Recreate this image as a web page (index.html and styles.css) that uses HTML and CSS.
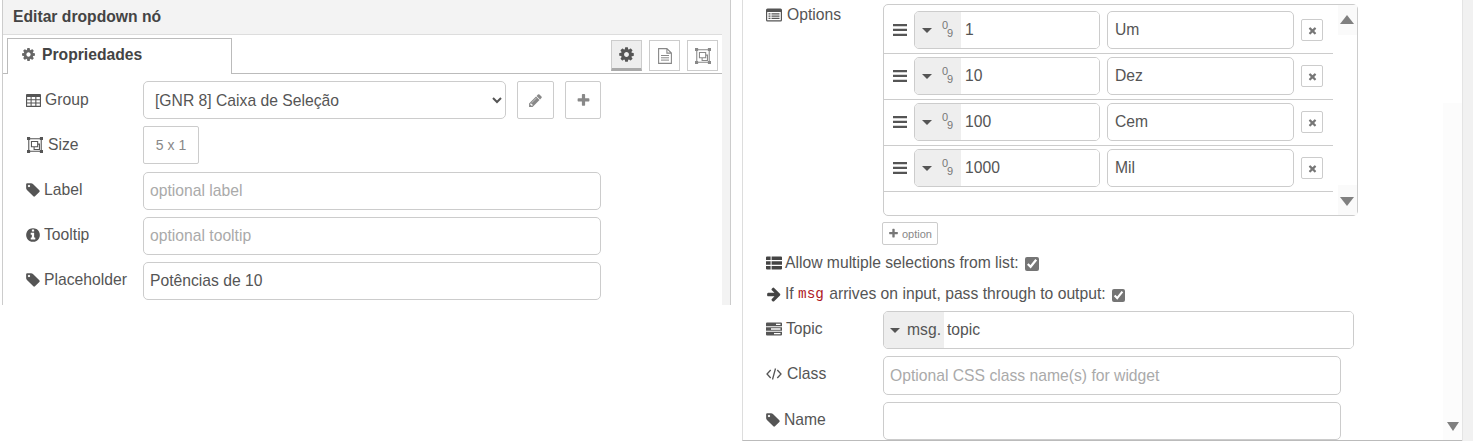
FILE: index.html

```html
<!DOCTYPE html>
<html lang="pt">
<head>
  <meta charset="UTF-8" />
  <title>Editar dropdown nó</title>
  <link rel="stylesheet" href="styles.css">
</head>
<body>
  <svg class="defs" xmlns="http://www.w3.org/2000/svg">
    <symbol id="i-cog" viewBox="0 0 1792 1792"><path d="M1152 896q0-106-75-181t-181-75-181 75-75 181 75 181 181 75 181-75 75-181zm512-109v222q0 12-8 23t-20 13l-185 28q-19 54-39 91 35 50 107 138 10 12 10 25t-9 23q-27 37-99 108t-94 71q-12 0-26-9l-138-108q-44 23-91 38-16 136-29 186-7 27-36 27h-222q-14 0-24.500-8.500t-11.500-21.500l-28-184q-49-16-90-37l-141 107q-10 9-25 9-14 0-25-11-126-114-165-168-7-10-7-23 0-12 8-23 15-21 51-66.500t54-70.500q-27-50-41-99l-183-27q-13-2-21-12.500t-8-23.500v-222q0-12 8-23t19-13l186-28q14-46 39-92-40-57-107-138-10-12-10-24 0-10 9-23 26-36 98.500-107.500t94.500-71.500q13 0 26 10l138 107q44-23 91-38 16-136 29-186 7-27 36-27h222q14 0 24.500 8.500t11.500 21.500l28 184q49 16 90 37l142-107q9-9 24-9 13 0 25 10 129 119 165 170 7 8 7 22 0 12-8 23-15 21-51 66.500t-54 70.500q26 50 41 98l183 28q13 2 21 12.500t8 23.500z"/></symbol>
    <symbol id="i-tag" viewBox="0 0 1792 1792"><path d="M576 448q0-53-37.500-90.500t-90.500-37.500-90.500 37.500-37.500 90.500 37.500 90.500 90.500 37.500 90.500-37.500 37.500-90.500zm1067 576q0 53-37 90l-491 492q-39 37-91 37-53 0-90-37l-715-716q-38-37-64.500-101t-26.500-117v-416q0-52 38-90t90-38h416q53 0 117 26.500t102 64.500l715 714q37 39 37 91z"/></symbol>
    <symbol id="i-info" viewBox="0 0 1792 1792"><path d="M1152 1376v-160q0-14-9-23t-23-9h-96v-512q0-14-9-23t-23-9h-320q-14 0-23 9t-9 23v160q0 14 9 23t23 9h96v320h-96q-14 0-23 9t-9 23v160q0 14 9 23t23 9h448q14 0 23-9t9-23zm-128-896v-160q0-14-9-23t-23-9h-192q-14 0-23 9t-9 23v160q0 14 9 23t23 9h192q14 0 23-9t9-23zm640 416q0 209-103 385.500t-279.500 279.500-385.500 103-385.500-103-279.500-279.500-103-385.500 103-385.500 279.500-279.500 385.500-103 385.500 103 279.500 279.500 103 385.500z"/></symbol>
    <symbol id="i-pencil" viewBox="0 0 1792 1792"><path d="M491 1536l91-91-235-235-91 91v107h128v128h107zm523-928q0-22-22-22-10 0-17 7l-542 542q-7 7-7 17 0 22 22 22 10 0 17-7l542-542q7-7 7-17zm-54-192l416 416-832 832h-416v-416zm683 96q0 53-37 90l-166 166-416-416 166-165q36-38 90-38 53 0 91 38l235 234q37 39 37 91z"/></symbol>
    <symbol id="i-plus" viewBox="0 0 1792 1792"><path d="M1600 736v192q0 40-28 68t-68 28h-416v416q0 40-28 68t-68 28h-192q-40 0-68-28t-28-68v-416h-416q-40 0-68-28t-28-68v-192q0-40 28-68t68-28h416v-416q0-40 28-68t68-28h192q40 0 68 28t28 68v416h416q40 0 68 28t28 68z"/></symbol>
    <symbol id="i-bars" viewBox="0 0 14 12"><path d="M0 0h14v2.300H0zM0 4.800h14v2.300H0zM0 9.700h14V12H0z"/></symbol>
    <symbol id="i-arrow" viewBox="0 0 1792 1792"><path d="M1600 960q0 54-37 91l-651 651q-39 37-91 37-51 0-90-37l-75-75q-38-38-38-91t38-91l293-293h-704q-52 0-84.500-37.500t-32.500-90.500v-128q0-53 32.500-90.500t84.500-37.500h704l-293-294q-38-36-38-90t38-90l75-75q38-38 90-38 53 0 91 38l651 651q37 35 37 90z"/></symbol>
    <symbol id="i-times" viewBox="0 0 1792 1792"><path d="M1490 1322q0 40-28 68l-136 136q-28 28-68 28t-68-28l-294-294-294 294q-28 28-68 28t-68-28l-136-136q-28-28-28-68t28-68l294-294-294-294q-28-28-28-68t28-68l136-136q28-28 68-28t68 28l294 294 294-294q28-28 68-28t68 28l136 136q28 28 28 68t-28 68l-294 294 294 294q28 28 28 68z"/></symbol>
    <symbol id="i-table" viewBox="0 0 16 14"><path fill-rule="evenodd" d="M1 0h14a1 1 0 0 1 1 1v12a1 1 0 0 1-1 1H1a1 1 0 0 1-1-1V1a1 1 0 0 1 1-1zm.2 3.300v2.400h3.700V3.300zm4.800 0v2.400h3.900V3.300zm5.100 0v2.400h3.700V3.300zM1.200 6.800v2.300h3.700V6.800zm4.800 0v2.300h3.900V6.800zm5.100 0v2.300h3.700V6.800zM1.200 10.200v2.500h3.700v-2.500zm4.800 0v2.500h3.900v-2.500zm5.100 0v2.500h3.700v-2.500z"/></symbol>
    <symbol id="i-select" viewBox="0 0 18 18"><path fill="none" stroke="currentColor" stroke-width="1.200" d="M2 2h14v14H2z"/><path fill="none" stroke="currentColor" stroke-width="1.200" d="M5 5h7v6H5zM8 11v3h6V8h-2"/><path d="M0 0h3.500v3.500H0zM14.500 0H18v3.500h-3.500zM0 14.500h3.500V18H0zM14.500 14.500H18V18h-3.500z"/></symbol>
    <symbol id="i-file" viewBox="0 0 14 16"><path fill="none" stroke="currentColor" stroke-width="1.100" d="M.6.600h8.300l4.500 4.500v10.300H.6zM8.900.600v4.500h4.500"/><path fill="none" stroke="currentColor" d="M3 7.500h8M3 9.800h8M3 12.100h8"/></symbol>
    <symbol id="i-listalt" viewBox="0 0 16 13"><path fill-rule="evenodd" d="M1.500 0h13A1.500 1.500 0 0 1 16 1.500v10a1.500 1.500 0 0 1-1.500 1.500h-13A1.500 1.500 0 0 1 0 11.500v-10A1.500 1.500 0 0 1 1.500 0zM1.200 3.400v8.100c0 .2.100.3.300.3h13c.2 0 .3-.1.300-.3V3.400z"/><path d="M2.500 4.800h2v1.300h-2zM2.500 7h2v1.300h-2zM2.500 9.200h2v1.300h-2zM5.500 4.800h8v1.300h-8zM5.500 7h8v1.300h-8zM5.500 9.200h8v1.300h-8z"/></symbol>
    <symbol id="i-thlist" viewBox="0 0 16 13"><path d="M1 0h3.600v3.600H0V1a1 1 0 0 1 1-1zM5.600 0H15a1 1 0 0 1 1 1v2.600H5.600zM0 4.700h4.600v3.600H0zM5.600 4.700H16v3.600H5.600zM0 9.400h4.600V13H1a1 1 0 0 1-1-1zM5.600 9.400H16V12a1 1 0 0 1-1 1H5.600z"/></symbol>
    <symbol id="i-tasks" viewBox="0 0 16 13"><path fill-rule="evenodd" d="M1 0h14a1 1 0 0 1 1 1v2.800H0V1a1 1 0 0 1 1-1zm9 1.200v1.400h4.500V1.200zM0 4.700h16v3.600H0zm5 1.100v1.400h9.500V5.800zM0 9.200h16V12a1 1 0 0 1-1 1H1a1 1 0 0 1-1-1zm8 1.200v1.400h6.500v-1.400z"/></symbol>
    <symbol id="i-code" viewBox="0 0 16 12"><path fill="none" stroke="currentColor" stroke-width="1.300" d="M4.700 2 1 6l3.700 4M11.300 2 15 6l-3.700 4M9.500 .5 6.500 11.500"/></symbol>
  </svg>

  <section class="left-pane">
    <div class="editor">
      <h1 class="editor-title">Editar dropdown nó</h1>
      <div class="tabs">
        <div class="tab"><svg class="icon tab-icon"><use href="#i-cog"/></svg>Propriedades</div>
        <div class="tab-tools">
          <a class="tool active"><svg class="icon tool-cog"><use href="#i-cog"/></svg></a>
          <a class="tool"><svg class="icon tool-file"><use href="#i-file"/></svg></a>
          <a class="tool"><svg class="icon tool-select"><use href="#i-select"/></svg></a>
        </div>
      </div>
      <div class="form">
        <div class="row">
          <label class="row-label lower"><svg class="icon"><use href="#i-table"/></svg>Group</label>
          <select class="field group-select"><option>[GNR 8] Caixa de Seleção</option></select>
          <a class="square-btn"><svg class="icon btn-icon"><use href="#i-pencil"/></svg></a>
          <a class="square-btn"><svg class="icon btn-icon"><use href="#i-plus"/></svg></a>
        </div>
        <div class="row">
          <label class="row-label lower"><svg class="icon size-icon"><use href="#i-select"/></svg>Size</label>
          <a class="size-btn">5 x 1</a>
        </div>
        <div class="row">
          <label class="row-label"><svg class="icon tag-icon"><use href="#i-tag"/></svg>Label</label>
          <input class="field wide" type="text" placeholder="optional label">
        </div>
        <div class="row">
          <label class="row-label"><svg class="icon tag-icon"><use href="#i-info"/></svg>Tooltip</label>
          <input class="field wide" type="text" placeholder="optional tooltip">
        </div>
        <div class="row">
          <label class="row-label"><svg class="icon tag-icon"><use href="#i-tag"/></svg>Placeholder</label>
          <input class="field wide" type="text" value="Potências de 10">
        </div>
      </div>
    </div>
    <div class="gutter"></div>
  </section>

  <section class="right-pane">
    <div class="right-body">
      <div class="options-block">
        <label class="side-label"><svg class="icon"><use href="#i-listalt"/></svg>Options</label>
        <div class="option-list">
          <div class="option-rows">
            <div class="option-row">
              <svg class="icon handle"><use href="#i-bars"/></svg>
              <div class="typed num"><span class="typed-sel"><i class="caret"></i><span class="num-glyph"><sup>0</sup><sub>9</sub></span></span><input type="text" value="1"></div>
              <input class="field opt-label" type="text" value="Um">
              <a class="del-btn"><svg class="icon"><use href="#i-times"/></svg></a>
            </div>
            <div class="option-row">
              <svg class="icon handle"><use href="#i-bars"/></svg>
              <div class="typed num"><span class="typed-sel"><i class="caret"></i><span class="num-glyph"><sup>0</sup><sub>9</sub></span></span><input type="text" value="10"></div>
              <input class="field opt-label" type="text" value="Dez">
              <a class="del-btn"><svg class="icon"><use href="#i-times"/></svg></a>
            </div>
            <div class="option-row">
              <svg class="icon handle"><use href="#i-bars"/></svg>
              <div class="typed num"><span class="typed-sel"><i class="caret"></i><span class="num-glyph"><sup>0</sup><sub>9</sub></span></span><input type="text" value="100"></div>
              <input class="field opt-label" type="text" value="Cem">
              <a class="del-btn"><svg class="icon"><use href="#i-times"/></svg></a>
            </div>
            <div class="option-row">
              <svg class="icon handle"><use href="#i-bars"/></svg>
              <div class="typed num"><span class="typed-sel"><i class="caret"></i><span class="num-glyph"><sup>0</sup><sub>9</sub></span></span><input type="text" value="1000"></div>
              <input class="field opt-label" type="text" value="Mil">
              <a class="del-btn"><svg class="icon"><use href="#i-times"/></svg></a>
            </div>
          </div>
          <div class="list-scroll"><i class="arrow-up"></i><i class="arrow-down"></i></div>
        </div>
      </div>
      <a class="add-btn"><svg class="icon"><use href="#i-plus"/></svg>option</a>
      <div class="check-row first"><svg class="icon"><use href="#i-thlist"/></svg>Allow multiple selections from list:<input type="checkbox" checked></div>
      <div class="check-row second"><svg class="icon arrow-icon"><use href="#i-arrow"/></svg>If <code>msg</code> arrives on input, pass through to output:<input class="small-check" type="checkbox" checked></div>
      <div class="row right-row topic-row">
        <label class="side-label"><svg class="icon"><use href="#i-tasks"/></svg>Topic</label>
        <div class="typed topic"><span class="typed-sel msg"><i class="caret"></i>msg.</span><input type="text" value="topic"></div>
      </div>
      <div class="row right-row class-row">
        <label class="side-label class-label"><svg class="icon"><use href="#i-code"/></svg>Class</label>
        <input class="field right-field" type="text" placeholder="Optional CSS class name(s) for widget">
      </div>
      <div class="row right-row">
        <label class="side-label"><svg class="icon tag-icon"><use href="#i-tag"/></svg>Name</label>
        <input class="field right-field" type="text">
      </div>
    </div>
    <div class="page-scroll"><i class="arrow-down"></i></div>
  </section>
</body>
</html>
```

FILE: styles.css

```css
* { box-sizing: border-box; }
html, body { height: 100%; }
body { margin: 0; display: flex; align-items: flex-start; height: 443px; overflow: hidden; background: #fff; font-family: "Liberation Sans", Arial, sans-serif; font-size: 15.7px; color: #555; }
.defs { display: none; }
a { display: flex; align-items: center; justify-content: center; }
.icon { width: 16px; height: 16px; fill: currentColor; flex: none; }

/* left capture */
.left-pane { display: flex; width: 742px; height: 305px; flex: none; }
.editor { width: 720px; margin-left: 2px; border-left: 1px solid #ccc; flex: none; }
.editor-title { margin: 0; height: 35px; padding: 8px 0 0 10px; background: #f3f3f3; border-bottom: 1px solid #ddd; font-size: 15.7px; line-height: 18px; font-weight: bold; color: #444; }
.tabs { display: flex; justify-content: space-between; height: 39px; padding-left: 4px; border-bottom: 1px solid #bbb; }
.tab { display: flex; align-items: center; width: 225px; height: 36px; margin-top: 3px; padding: 0 0 4px 13px; background: #fff; border: 1px solid #bbb; border-bottom: none; font-weight: bold; color: #444; }
.tab-icon { width: 15px; height: 15px; margin-right: 6px; color: #666; }
.tab-tools { display: flex; gap: 7px; padding: 5px 4px 0 0; }
.tool { width: 31px; height: 31px; border: 1px solid #ccc; color: #666; }
.tool.active { background: #eee; border-bottom: 3px solid #aaa; }
.tool-cog { width: 17px; height: 17px; color: #555; }
.tool-file { width: 14px; height: 16px; color: #888; }
.tool-select { width: 18px; height: 16px; color: #888; }

.form { padding: 7px 0 0 23px; }
.row { display: flex; align-items: flex-start; height: 38px; margin-bottom: 7.250px; }
.row-label { display: flex; align-items: center; gap: 4px; width: 117px; height: 37px; padding-bottom: 1px; flex: none; }
.row-label.lower { padding-bottom: 0; height: 38px; }
.row-label .icon { width: 15px; height: 15px; }
.row-label .size-icon { width: 18px; height: 16px; }
.row-label .tag-icon { width: 16px; height: 16px; margin: 0 -1px; }
.field { height: 100%; padding: 0 6px; background: #fff; border: 1px solid #ccc; border-radius: 5px; font: inherit; color: #555; outline: none; }
.field::placeholder { color: #aaa; opacity: 1; }
.wide { width: 458px; }
.group-select { width: 363px; padding-left: 7px; margin-right: 11px; }
.square-btn { width: 37px; height: 100%; margin-right: 11px; border: 1px solid #ccc; border-radius: 2px; color: #888; }
.square-btn + .square-btn { width: 36px; margin-right: 0; }
.btn-icon { width: 15px; height: 15px; }
.size-btn { width: 56px; height: 38px; border: 1px solid #ccc; border-radius: 2px; font-size: 14px; color: #888; }

.gutter { width: 8px; height: 305px; background: #f3f3f3; border-right: 1px solid #ccc; box-sizing: content-box; }

/* right capture */
.right-pane { display: flex; width: 731px; height: 441px; flex: none; }
.right-body { width: 720px; height: 441px; overflow: hidden; padding: 4px 0 0 23px; border-left: 1px solid #ddd; border-bottom: 1px solid #bbb; background: linear-gradient(#fcfcfc, #fcfcfc) right 0 top 103px / 19px 100% no-repeat; }
.options-block { display: flex; }
.side-label { display: flex; align-items: center; gap: 4px; width: 117px; flex: none; }
.options-block .side-label { height: 20px; padding-top: 1px; gap: 5px; }
.side-label .icon { width: 16px; height: 14px; }
.side-label .tag-icon { width: 16px; height: 16px; margin: 0 -1px; }
.class-label { gap: 5px; }
.option-list { display: flex; justify-content: space-between; width: 475px; height: 212px; padding-top: 3px; background: #fff; border: 1px solid #ccc; border-radius: 5px; }
.option-rows { width: 449px; }
.option-row { display: flex; align-items: center; height: 46px; padding: 3px 0 4px 9px; border-bottom: 1px solid #ccc; }
.handle { width: 14px; height: 12px; margin-right: 7px; color: #555; }
.typed { display: flex; height: 38px; overflow: hidden; border: 1px solid #ccc; border-radius: 5px; }
.typed input { flex: 1; min-width: 0; padding: 0 4px; border: none; outline: none; font: inherit; color: #555; background: #fff; }
.typed-sel { display: flex; align-items: center; background: #eee; flex: none; }
.caret { width: 0; height: 0; border: 5px solid transparent; border-top: 5px solid #555; border-bottom: none; }
.num { width: 186px; }
.num .typed-sel { width: 46px; padding-left: 7px; }
.num-glyph { position: relative; display: block; width: 14px; height: 16px; margin-left: 10px; font-size: 11px; line-height: 11px; color: #777; }
.num-glyph sup, .num-glyph sub { position: absolute; font-size: 11px; line-height: 11px; vertical-align: baseline; }
.num-glyph sup { left: 0; top: -2px; }
.num-glyph sub { left: 5px; top: 6px; }
.opt-label { width: 187px; margin-left: 7px; height: 38px; padding-left: 7px; }
.del-btn { width: 22px; height: 22px; margin-left: 7px; border: 1px solid #ccc; border-radius: 2px; color: #777; }
.del-btn .icon { width: 11px; height: 11px; }
.list-scroll { position: relative; width: 19px; margin-top: -3px; height: 210px; background: linear-gradient(#fafafa, #fafafa) top / 100% 30px no-repeat, linear-gradient(#fafafa, #fafafa) bottom / 100% 30px no-repeat; }
.arrow-up, .arrow-down { position: absolute; right: 3px; width: 0; height: 0; border-left: 7px solid transparent; border-right: 7px solid transparent; }
.arrow-up { top: 10px; border-bottom: 9px solid #808080; }
.arrow-down { bottom: 9px; border-top: 9px solid #808080; }

.add-btn { gap: 3px; width: 56px; height: 23px; margin: 6px 0 0 116px; border: 1px solid #ccc; border-radius: 2px; font-size: 11px; color: #888; }
.add-btn .icon { width: 11px; height: 11px; color: #777; }
.check-row { display: flex; align-items: center; height: 18px; line-height: 18px; white-space: pre; }
.check-row.first { margin-top: 9px; }
.check-row.second { margin-top: 13px; }
.check-row .icon { width: 16px; height: 14px; margin-right: 3px; color: #444; }
.check-row .arrow-icon { width: 16px; height: 16px; }
.check-row input { width: 14px; height: 14px; margin: 2px 0 0 6px; accent-color: #757575; }
.check-row .small-check { width: 13px; height: 13px; }
.check-row code { margin-right: 1px; font-family: "Liberation Mono", monospace; font-size: 14.300px; color: #ad1625; }
.right-row { margin-bottom: 7px; height: 38px; }
.class-row { height: 39px; }
.topic-row { margin-top: 8px; }
.right-row .side-label { height: 36px; }
.topic { width: 471px; }
.msg { gap: 7px; width: 60px; padding-left: 6px; }
.topic input { padding-left: 3px; }
.right-field { width: 458px; }
.page-scroll { position: relative; width: 11px; height: 441px; background: #f1f1f1; border-left: 1px solid #e4e4e4; }
.page-scroll .arrow-down { right: 14px; bottom: 10px; border-left-width: 6.500px; border-right-width: 6.500px; }
```
